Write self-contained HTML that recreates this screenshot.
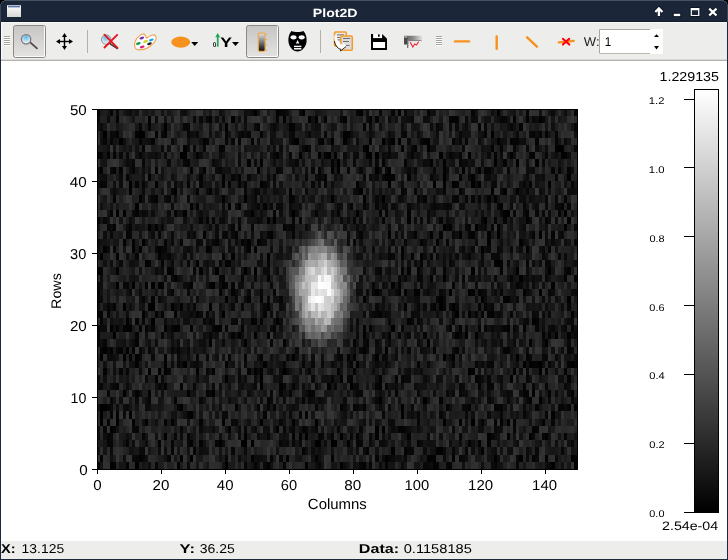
<!DOCTYPE html>
<html><head><meta charset="utf-8">
<style>
html,body{margin:0;padding:0;width:728px;height:560px;overflow:hidden;background:#000;}
body{position:relative;font-family:"Liberation Sans",sans-serif;color:#000;}
.a{position:absolute;}
#win{left:0;top:0;width:728px;height:560px;background:#1b2638;}
#ttop{left:4px;top:0;width:720px;height:1px;background:#465162;}
#tb{left:1px;top:22px;width:726px;height:37px;background:#ededec;}
#tbhl{left:1px;top:22px;width:1px;height:37px;background:#fbfbfa;}
#tbl1{left:1px;top:59px;width:726px;height:1px;background:#d9d9d5;}
#tbl2{left:1px;top:60px;width:726px;height:1px;background:#b4b3ad;}
#plotbg{left:1px;top:61px;width:726px;height:480px;background:#fff;}
#status{left:1px;top:541px;width:726px;height:18px;background:#ededec;}
#img{left:97px;top:109px;width:480px;height:360px;overflow:hidden;
 background:radial-gradient(ellipse 28px 50px at 224px 178px,#e8e8e8 0%,#a0a0a0 45%,#3a3a3a 85%,#1b1b1b 100%) ,#1b1b1b;}
#cv{width:480px;height:360px;image-rendering:pixelated;display:block;}
svg text{font-family:"Liberation Sans",sans-serif;text-rendering:geometricPrecision;}
</style></head><body>
<div class="a" id="win"></div>
<div class="a" id="ttop"></div>
<div class="a" id="tb"></div>
<div class="a" id="tbhl"></div>
<div class="a" id="tbl1"></div>
<div class="a" id="tbl2"></div>
<div class="a" id="plotbg"></div>
<div class="a" id="status"></div>

<div class="a" id="img"><canvas id="cv" width="150" height="50"></canvas></div>

<svg class="a" style="left:0;top:0" width="728" height="560" viewBox="0 0 728 560">
<defs>
 <linearGradient id="gbtn" x1="0" y1="0" x2="0" y2="1"><stop offset="0" stop-color="#c6c5c3"/><stop offset="1" stop-color="#e4e3e1"/></linearGradient>
 <linearGradient id="gwin" x1="0" y1="0" x2="0" y2="1"><stop offset="0" stop-color="#ffffff"/><stop offset="1" stop-color="#d8d8d4"/></linearGradient>
 <radialGradient id="glens" cx="0.5" cy="0.25" r="0.75"><stop offset="0" stop-color="#5bb8e8"/><stop offset="0.6" stop-color="#bfe0f0"/><stop offset="1" stop-color="#f2f7fa"/></radialGradient>
 <linearGradient id="gcb" x1="0" y1="0" x2="0" y2="1"><stop offset="0" stop-color="#ffffff"/><stop offset="1" stop-color="#000"/></linearGradient>
 <linearGradient id="gicb" x1="0" y1="0" x2="0" y2="1"><stop offset="0" stop-color="#e4e6ea"/><stop offset="1" stop-color="#0a0a0a"/></linearGradient>
 <linearGradient id="gprt" x1="0" y1="0" x2="1" y2="0"><stop offset="0" stop-color="#5a5a5a"/><stop offset="0.5" stop-color="#8a8a8a"/><stop offset="1" stop-color="#e2e2e2"/></linearGradient>
 <linearGradient id="gpap" x1="0" y1="0" x2="1" y2="1"><stop offset="0" stop-color="#d0d0d0"/><stop offset="0.5" stop-color="#f4f4f4"/><stop offset="1" stop-color="#e4e4e4"/></linearGradient>
</defs>

<!-- title bar -->
<rect x="7" y="5" width="14" height="12" fill="url(#gwin)"/>
<rect x="7" y="5" width="14" height="1" fill="#b9bcc2"/>
<rect x="8" y="6" width="12" height="1.4" fill="#5677b0"/>
<g stroke="#0c131e" stroke-width="1" fill="none" opacity="0.8">
<path d="M658.9 16.4 V9.2 M654.7 12.3 L658.9 8 L663.1 12.3" stroke-width="3.6"/>
<rect x="673.3" y="13.3" width="7.4" height="3.3" stroke-width="1"/>
<path d="M690.2 7.5 H699.9 V16.6 H690.2 Z" stroke-width="1"/>
<path d="M708.8 8.3 L716.9 15.8 M716.9 8.3 L708.8 15.8" stroke-width="3.4"/>
</g>
<path d="M658.9 16 V9.4 M655.3 12 L658.9 8.4 L662.5 12" stroke="#fff" stroke-width="2.3" fill="none"/>
<rect x="673.8" y="13.8" width="6.4" height="2.3" fill="#fff"/>
<path d="M690.7 8 H699.4 V16.1 H690.7 Z M691.9 10.2 V14.9 H698.1 V10.2 Z" fill="#fff" fill-rule="evenodd"/>
<path d="M709.2 8.6 L716.5 15.5 M716.5 8.6 L709.2 15.5" stroke="#fff" stroke-width="2.2" fill="none"/>

<!-- toolbar grips -->
<g fill="#a4a49b">
 <rect x="4" y="36" width="6" height="1"/><rect x="4" y="38" width="6" height="1"/><rect x="4" y="40" width="6" height="1"/><rect x="4" y="42" width="6" height="1"/><rect x="4" y="44" width="6" height="1"/>
 <rect x="436" y="36" width="6" height="1"/><rect x="436" y="38" width="6" height="1"/><rect x="436" y="40" width="6" height="1"/><rect x="436" y="42" width="6" height="1"/><rect x="436" y="44" width="6" height="1"/>
</g>
<g fill="#fff">
 <rect x="4" y="37" width="6" height="1"/><rect x="4" y="39" width="6" height="1"/><rect x="4" y="41" width="6" height="1"/><rect x="4" y="43" width="6" height="1"/><rect x="4" y="45" width="6" height="1"/>
 <rect x="436" y="37" width="6" height="1"/><rect x="436" y="39" width="6" height="1"/><rect x="436" y="41" width="6" height="1"/><rect x="436" y="43" width="6" height="1"/><rect x="436" y="45" width="6" height="1"/>
</g>

<!-- checked buttons -->
<rect x="13.5" y="25.5" width="32" height="32" rx="2" fill="url(#gbtn)" stroke="#8b8784"/>
<path d="M15 56.5 H44.5 V26.5" stroke="#fafaf9" fill="none"/>
<rect x="246.5" y="25.5" width="32" height="32" rx="2" fill="url(#gbtn)" stroke="#8b8784"/>
<path d="M248 56.5 H277.5 V26.5" stroke="#fafaf9" fill="none"/>

<!-- zoom icon -->
<line x1="30.2" y1="42.3" x2="37.0" y2="48.4" stroke="#54464a" stroke-width="1.8" stroke-linecap="round"/>
<circle cx="26.1" cy="39.3" r="4.7" fill="url(#glens)" stroke="#7f7577" stroke-width="1.25"/>

<!-- pan icon -->
<g fill="#000">
 <rect x="63.8" y="35" width="1.4" height="13"/>
 <rect x="58" y="40.8" width="13" height="1.4"/>
 <path d="M64.5 33 L67 37 L62 37 Z"/>
 <path d="M64.5 50 L67 46 L62 46 Z"/>
 <path d="M56 41.5 L60 39 L60 44 Z"/>
 <path d="M73 41.5 L69 39 L69 44 Z"/>
</g>

<!-- separators -->
<rect x="87" y="30" width="1" height="23" fill="#b3b1ad"/>
<rect x="320" y="30" width="1" height="23" fill="#b3b1ad"/>

<!-- reset zoom -->
<line x1="109" y1="43" x2="117.8" y2="48.8" stroke="#3c3c3c" stroke-width="1.6"/>
<circle cx="106.2" cy="39.6" r="4.7" fill="url(#glens)" stroke="#8f8f8f" stroke-width="1"/>
<path d="M104.4 34.7 L117.5 47.8 M117.2 34.9 L104.5 47.5" stroke="#e8141e" stroke-width="1.9" stroke-linecap="round"/>

<!-- palette -->
<path d="M146.3 38.2 C145.6 36.2 145.2 33.6 143.2 33.9 C138.5 34.6 133.6 41.2 134.8 46.8 C136 51.5 145 50.6 151 45.6 C155 42.2 157 38.2 155.6 35.9 C154.2 34 151 35 148.6 36.8 C147.8 37.4 146.8 38.6 146.3 38.2 Z" fill="#fff" stroke="#f2a048" stroke-width="1.05"/>
<g transform="rotate(-18)">
</g>
<ellipse cx="141.8" cy="38.1" rx="2.45" ry="1.25" fill="#6a2aa8" transform="rotate(-18 141.8 38.1)"/>
<ellipse cx="151.4" cy="39.9" rx="2.45" ry="1.25" fill="#1aa6e8" transform="rotate(-18 151.4 39.9)"/>
<ellipse cx="145.6" cy="41.4" rx="2.45" ry="1.25" fill="#c8d21a" transform="rotate(-18 145.6 41.4)"/>
<ellipse cx="138.4" cy="43.5" rx="2.45" ry="1.25" fill="#13a040" transform="rotate(-18 138.4 43.5)"/>
<ellipse cx="149.5" cy="43.7" rx="2.45" ry="1.25" fill="#2a2a2a" transform="rotate(-18 149.5 43.7)"/>
<ellipse cx="142.2" cy="46.9" rx="2.45" ry="1.25" fill="#e01a78" transform="rotate(-18 142.2 46.9)"/>

<!-- ellipse + arrow -->
<ellipse cx="180.7" cy="42.1" rx="9.5" ry="5.6" fill="#f7921e"/>
<path d="M191.2 42 L198.2 42 L194.7 46 Z" fill="#000"/>

<!-- Y axis icon -->
<rect x="216.9" y="36.5" width="1.7" height="10.2" fill="#20a656"/>
<path d="M217.7 33 L220.2 37.3 L215.2 37.3 Z" fill="#20a656"/>
<path d="M232 42 L239 42 L235.5 46 Z" fill="#000"/>

<!-- colorbar icon -->
<rect x="258.3" y="33.1" width="6.8" height="18.2" rx="1.5" fill="url(#gicb)" stroke="#f2a848" stroke-width="1.15"/>
<g stroke="#f0a038" stroke-width="0.9"><line x1="265.5" y1="34.5" x2="267.2" y2="34.5"/><line x1="265.5" y1="39.6" x2="267.2" y2="39.6"/><line x1="265.5" y1="44.9" x2="267.2" y2="44.9"/><line x1="265.5" y1="50.3" x2="267.2" y2="50.3"/></g>

<!-- mask -->
<path d="M291.5 31 C294.5 32.3 300.5 32.3 303.5 31 C306 33.5 306.8 37.5 306.6 41 C306.4 46.5 302 51.5 297.5 51.5 C293 51.5 288.6 46.5 288.4 41 C288.2 37.5 289 33.5 291.5 31 Z" fill="#000"/>
<ellipse cx="293.5" cy="37.3" rx="3" ry="2.1" fill="#fff"/>
<ellipse cx="301.7" cy="37.3" rx="3" ry="2.1" fill="#fff"/>
<path d="M297.6 39.9 L299.3 43.6 L295.9 43.6 Z" fill="#fff"/>
<rect x="294" y="45.7" width="7.4" height="1.4" fill="#fff"/>
<rect x="294" y="48" width="7.4" height="1.5" fill="#fff"/>

<!-- copy -->
<rect x="334.5" y="32" width="11.8" height="14" rx="1.2" fill="#e8e8e8" stroke="#f39a2a" stroke-width="1.5"/>
<g fill="#555"><rect x="337" y="34.5" width="7" height="0.8"/><rect x="337" y="37" width="3" height="0.8"/><rect x="337" y="39.5" width="3" height="0.8"/></g>
<rect x="340.8" y="36" width="11.5" height="14.3" rx="1.2" fill="#dcdcdc" stroke="#f39a2a" stroke-width="1.5"/>
<g fill="#555"><rect x="343" y="38.2" width="7" height="0.8"/><rect x="343" y="41.2" width="6" height="0.8"/><rect x="346" y="45.2" width="3.5" height="0.8"/></g>
<path d="M334.3 35.5 C334.2 42 336.3 46.8 340.8 48.6 L340.2 51 L346.2 46.3 L343.4 42.6 L342.7 45 C339.6 43.8 337 40.5 336.8 35.5 Z" fill="#fff"/>
<path d="M334.4 41 C335 45.5 337.3 48.3 340.9 49.6 L340.4 51 L346 46.6" fill="none" stroke="#1a1a1a" stroke-width="0.9"/>

<!-- save -->
<path d="M371 34 H382.2 L387 38.8 V50 H371 Z" fill="#000"/>
<rect x="373.1" y="34" width="9" height="4.1" fill="#fff"/>
<rect x="378" y="34.4" width="1.7" height="2.3" fill="#000"/>
<rect x="373" y="42" width="12.1" height="6" fill="#fff"/>

<!-- print -->
<rect x="404" y="35.8" width="18" height="4.8" rx="0.6" fill="url(#gprt)"/>
<rect x="404.6" y="36.3" width="2.2" height="1.2" fill="#c8c8c8"/>
<rect x="404" y="38" width="3.4" height="6.5" fill="#4a4a4a"/>
<rect x="407.2" y="40.4" width="14.3" height="1" fill="#5a5a5a"/>
<rect x="407.4" y="41" width="14" height="7.1" rx="0.8" fill="url(#gpap)"/>
<rect x="407.2" y="41" width="1.1" height="7.1" fill="#5c5c5c"/>
<path d="M410.3 42.3 L412.8 47 L414.7 44 L416.4 45 L418.8 41.6" stroke="#e8303a" stroke-width="1.2" fill="none"/>

<!-- lines -->
<line x1="455" y1="41.4" x2="469" y2="41.4" stroke="#f7921e" stroke-width="2.4" stroke-linecap="round"/>
<line x1="496.7" y1="36.5" x2="496.7" y2="48.8" stroke="#f7921e" stroke-width="2.4" stroke-linecap="round"/>
<line x1="527.1" y1="37.3" x2="536.9" y2="46.7" stroke="#f7921e" stroke-width="2.4" stroke-linecap="round"/>
<line x1="558.8" y1="42.3" x2="573.8" y2="40.8" stroke="#f7921e" stroke-width="2.2" stroke-linecap="round"/>
<path d="M562.9 38.7 L569.3 44.6 M569.2 38.7 L562.9 44.6" stroke="#ff0000" stroke-width="2" stroke-linecap="round"/>

<!-- W spin -->
<rect x="599.5" y="29.5" width="51" height="24" fill="#fff"/>
<path d="M599.5 53.5 V29.5 H650.5" stroke="#a9a79f" fill="none"/>
<path d="M600 53.5 H650.5" stroke="#b9b7b0" fill="none"/>
<rect x="650" y="29" width="13" height="25" fill="#fff"/>
<path d="M654 37 L659 37 L656.5 34.3 Z" fill="#000"/>
<path d="M654 46 L659 46 L656.5 49.4 Z" fill="#000"/>

<!-- plot frame & ticks -->
<g fill="#000" shape-rendering="crispEdges">
 <rect x="97" y="109" width="481" height="1"/>
 <rect x="97" y="469" width="481" height="1"/>
 <rect x="97" y="109" width="1" height="361"/>
 <rect x="577" y="109" width="1" height="361"/>
 <rect x="92" y="109" width="5" height="1"/>
 <rect x="92" y="181" width="5" height="1"/>
 <rect x="92" y="253" width="5" height="1"/>
 <rect x="92" y="325" width="5" height="1"/>
 <rect x="92" y="397" width="5" height="1"/>
 <rect x="92" y="469" width="5" height="1"/>
 <rect x="97" y="470" width="1" height="4"/>
 <rect x="161" y="470" width="1" height="4"/>
 <rect x="225" y="470" width="1" height="4"/>
 <rect x="289" y="470" width="1" height="4"/>
 <rect x="353" y="470" width="1" height="4"/>
 <rect x="417" y="470" width="1" height="4"/>
 <rect x="481" y="470" width="1" height="4"/>
 <rect x="545" y="470" width="1" height="4"/>
</g>

<!-- colorbar -->
<rect x="695" y="90" width="23" height="422" fill="url(#gcb)"/>
<rect x="694.5" y="89.5" width="24" height="423" fill="none" stroke="#000"/>
<g fill="#000" shape-rendering="crispEdges">
 <rect x="684" y="99" width="10" height="1"/>
 <rect x="684" y="167" width="10" height="1"/>
 <rect x="684" y="236" width="10" height="1"/>
 <rect x="684" y="305" width="10" height="1"/>
 <rect x="684" y="374" width="10" height="1"/>
 <rect x="684" y="443" width="10" height="1"/>
 <rect x="684" y="512" width="10" height="1"/>
</g>

<!-- status -->
<!--T-->
<text id="title" x="312.77" y="17.00" font-size="11.89" font-weight="bold" fill="#fff" textLength="44.82" lengthAdjust="spacingAndGlyphs">Plot2D</text>
<text id="y0s" x="212.66" y="47.00" font-size="6.92" font-weight="bold" fill="#222" textLength="3.61" lengthAdjust="spacingAndGlyphs">0</text>
<text id="Ybig" x="220.38" y="47.00" font-size="13.66" font-weight="bold" fill="#000" textLength="11.72" lengthAdjust="spacingAndGlyphs">Y</text>
<text id="W" x="583.85" y="46.00" font-size="12.86" fill="#222" textLength="15.72" lengthAdjust="spacingAndGlyphs">W:</text>
<text id="one" x="604.71" y="46.00" font-size="12.86" fill="#000" textLength="6.53" lengthAdjust="spacingAndGlyphs">1</text>
<text id="yl50" x="69.90" y="115.00" font-size="14.30" fill="#000" textLength="16.81" lengthAdjust="spacingAndGlyphs">50</text>
<text id="yl40" x="69.84" y="187.00" font-size="14.30" fill="#000" textLength="16.93" lengthAdjust="spacingAndGlyphs">40</text>
<text id="yl30" x="70.03" y="259.00" font-size="14.30" fill="#000" textLength="16.23" lengthAdjust="spacingAndGlyphs">30</text>
<text id="yl20" x="69.90" y="331.00" font-size="14.30" fill="#000" textLength="16.88" lengthAdjust="spacingAndGlyphs">20</text>
<text id="yl10" x="70.53" y="403.00" font-size="14.30" fill="#000" textLength="15.84" lengthAdjust="spacingAndGlyphs">10</text>
<text id="yl0" x="79.18" y="475.00" font-size="14.30" fill="#000" textLength="8.46" lengthAdjust="spacingAndGlyphs">0</text>
<text id="xl0" x="93.21" y="490.00" font-size="14.30" fill="#000" textLength="8.39" lengthAdjust="spacingAndGlyphs">0</text>
<text id="xl20" x="152.61" y="490.00" font-size="14.30" fill="#000" textLength="16.84" lengthAdjust="spacingAndGlyphs">20</text>
<text id="xl40" x="216.82" y="490.00" font-size="14.30" fill="#000" textLength="16.64" lengthAdjust="spacingAndGlyphs">40</text>
<text id="xl60" x="280.89" y="490.00" font-size="14.30" fill="#000" textLength="16.31" lengthAdjust="spacingAndGlyphs">60</text>
<text id="xl80" x="344.18" y="490.00" font-size="14.30" fill="#000" textLength="17.00" lengthAdjust="spacingAndGlyphs">80</text>
<text id="xl100" x="404.52" y="490.00" font-size="14.30" fill="#000" textLength="24.62" lengthAdjust="spacingAndGlyphs">100</text>
<text id="xl120" x="468.12" y="490.00" font-size="14.30" fill="#000" textLength="25.08" lengthAdjust="spacingAndGlyphs">120</text>
<text id="xl140" x="532.14" y="490.00" font-size="14.30" fill="#000" textLength="24.92" lengthAdjust="spacingAndGlyphs">140</text>
<text id="cols" x="307.85" y="509.00" font-size="14.71" fill="#000" textLength="58.99" lengthAdjust="spacingAndGlyphs">Columns</text>
<text id="rows" transform="translate(60.97 308.93) rotate(-90)" font-size="13.87" fill="#000" textLength="35.72" lengthAdjust="spacingAndGlyphs">Rows</text>
<text id="c12" x="648.87" y="104.00" font-size="9.80" fill="#000" textLength="15.61" lengthAdjust="spacingAndGlyphs">1.2</text>
<text id="c10" x="648.87" y="173.00" font-size="9.80" fill="#000" textLength="15.68" lengthAdjust="spacingAndGlyphs">1.0</text>
<text id="c08" x="649.40" y="242.00" font-size="9.80" fill="#000" textLength="15.21" lengthAdjust="spacingAndGlyphs">0.8</text>
<text id="c06" x="649.37" y="311.00" font-size="9.80" fill="#000" textLength="15.23" lengthAdjust="spacingAndGlyphs">0.6</text>
<text id="c04" x="649.34" y="379.00" font-size="9.80" fill="#000" textLength="15.41" lengthAdjust="spacingAndGlyphs">0.4</text>
<text id="c02" x="649.32" y="448.00" font-size="9.80" fill="#000" textLength="15.38" lengthAdjust="spacingAndGlyphs">0.2</text>
<text id="c00" x="649.33" y="517.00" font-size="9.80" fill="#000" textLength="15.09" lengthAdjust="spacingAndGlyphs">0.0</text>
<text id="cmax" x="659.51" y="81.00" font-size="12.94" fill="#000" textLength="59.43" lengthAdjust="spacingAndGlyphs">1.229135</text>
<text id="cmin" x="662.07" y="530.00" font-size="12.27" fill="#000" textLength="56.09" lengthAdjust="spacingAndGlyphs">2.54e-04</text>
<text id="sX" x="0.93" y="553.00" font-size="12.86" font-weight="bold" fill="#000" textLength="14.57" lengthAdjust="spacingAndGlyphs">X:</text>
<text id="sXv" x="21.61" y="553.00" font-size="12.86" fill="#000" textLength="42.58" lengthAdjust="spacingAndGlyphs">13.125</text>
<text id="sY" x="179.60" y="553.00" font-size="12.86" font-weight="bold" fill="#000" textLength="15.30" lengthAdjust="spacingAndGlyphs">Y:</text>
<text id="sYv" x="199.82" y="553.00" font-size="12.86" fill="#000" textLength="35.01" lengthAdjust="spacingAndGlyphs">36.25</text>
<text id="sD" x="358.87" y="553.00" font-size="12.86" font-weight="bold" fill="#000" textLength="40.19" lengthAdjust="spacingAndGlyphs">Data:</text>
<text id="sDv" x="403.69" y="553.00" font-size="12.86" fill="#000" textLength="68.19" lengthAdjust="spacingAndGlyphs">0.1158185</text>
<!--/T-->
</svg>

<div class="a" style="left:0;top:22px;width:1px;height:538px;background:#1d2939"></div>
<div class="a" style="left:727px;top:22px;width:1px;height:538px;background:#1d2939"></div>
<div class="a" style="left:0;top:559px;width:728px;height:1px;background:#1d2939"></div>
<div class="a" style="left:0;top:4px;width:1px;height:18px;background:#3b4554"></div>
<div class="a" style="left:727px;top:4px;width:1px;height:18px;background:#3b4554"></div>
<div class="a" style="left:1px;top:21px;width:726px;height:1px;background:#141d2b"></div>
<div class="a" style="left:1px;top:22px;width:726px;height:1px;background:#f9f9f8"></div>
<div class="a" style="left:0;top:0;width:4px;height:1px;background:#000"></div>
<div class="a" style="left:0;top:1px;width:2px;height:1px;background:#000"></div>
<div class="a" style="left:0;top:2px;width:1px;height:2px;background:#000"></div>
<div class="a" style="left:2px;top:1px;width:2px;height:1px;background:#3e4859"></div>
<div class="a" style="left:1px;top:2px;width:1px;height:2px;background:#3e4859"></div>
<div class="a" style="left:724px;top:0;width:4px;height:1px;background:#000"></div>
<div class="a" style="left:726px;top:1px;width:2px;height:1px;background:#000"></div>
<div class="a" style="left:727px;top:2px;width:1px;height:2px;background:#000"></div>
<div class="a" style="left:724px;top:1px;width:2px;height:1px;background:#3e4859"></div>
<div class="a" style="left:726px;top:2px;width:1px;height:2px;background:#3e4859"></div>

<script>
(function(){
var c=document.getElementById('cv');if(!c.getContext)return;var ctx=c.getContext('2d');
var W=150,H=50;var id=ctx.createImageData(W,H);var d=id.data;
var s=987654321;function r(){s^=s<<13;s>>>=0;s^=s>>>17;s^=s<<5;s>>>=0;return s/4294967296;}
for(var y=0;y<H;y++){for(var x=0;x<W;x++){
 var row=H-1-y; var dx=(x+0.5-70.0), dy=(row+0.5-24.9);
 var g=Math.exp(-Math.pow(dx*dx/(2*5.6*5.6)+dy*dy/(2*4.4*4.4),1.4));
 var v=r()*0.26+g*1.0; var p=Math.max(0,Math.min(255,Math.round(v/1.229*255)));
 var i=(y*W+x)*4; d[i]=d[i+1]=d[i+2]=p; d[i+3]=255;}}
ctx.putImageData(id,0,0);
})();
</script>
</body></html>
